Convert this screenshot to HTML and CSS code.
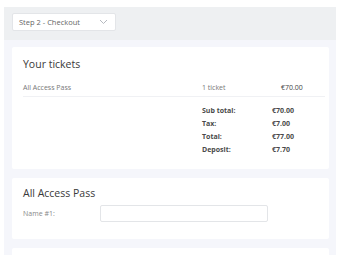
FILE: index.html
```html
<!DOCTYPE html>
<html>
<head>
  <title>Checkout</title>
  <link rel="stylesheet" href="styles.css">
</head>
<body>
  <div class="page">
    <div class="topbar">
      <div class="step-select">
        <span>Step 2 - Checkout</span>
        <svg class="chevron" width="9" height="6" viewBox="0 0 9 6"><path d="M1 1l3.5 3.5L8 1" fill="none" stroke="#b5b9bf" stroke-width="1"/></svg>
      </div>
    </div>

    <div class="content">
      <div class="card">
        <h2>Your tickets</h2>
        <div class="ticket-row">
          <span class="t-name">All Access Pass</span>
          <span class="t-qty">1 ticket</span>
          <span class="t-price">€70.00</span>
        </div>
        <div class="totals">
          <div class="total-row"><span>Sub total:</span><span>€70.00</span></div>
          <div class="total-row"><span>Tax:</span><span>€7.00</span></div>
          <div class="total-row"><span>Total:</span><span>€77.00</span></div>
          <div class="total-row"><span>Deposit:</span><span>€7.70</span></div>
        </div>
      </div>

      <div class="card attendee">
        <h2>All Access Pass</h2>
        <div class="field">
          <label for="name-1">Name #1:</label>
          <input type="text" id="name-1">
        </div>
      </div>

      <div class="card"></div>
    </div>
  </div>
</body>
</html>
```

FILE: styles.css
```css
body {
  font-family: 'Open Sans', 'Noto Sans', sans-serif;
  margin: 0;
  padding: 7px 4px 0 4px;
  background: #ffffff;
  color: #333;
  overflow: hidden;
  height: 255px;
  box-sizing: border-box;
}

.page {
  background: #f5f6fb;
  height: 100%;
  overflow: hidden;
}

.topbar {
  background: #eef0f2;
  height: 33px;
  padding: 6px 8px 0 8px;
  box-sizing: border-box;
}

.step-select {
  width: 104px;
  height: 18px;
  box-sizing: border-box;
  background: #fff;
  border: 1px solid #e3e5e8;
  border-radius: 2px;
  display: flex;
  align-items: center;
  justify-content: space-between;
  padding: 0 6px 0 6px;
  font-size: 7.5px;
  color: #666;
}

.chevron {
  margin-right: 1px;
}

.content {
  padding: 7px 7px 0 8px;
  display: flex;
  flex-direction: column;
  gap: 9px;
}

.card {
  background: #fff;
  border-radius: 2px;
  padding: 10px 4px 13px 11px;
  min-height: 20px;
}

.card h2 {
  font-size: 10.5px;
  font-weight: 400;
  color: #3a3a3a;
  margin: 0 0 12px 0;
}

.ticket-row {
  display: flex;
  font-size: 7px;
  color: #777;
  padding-bottom: 4px;
  border-bottom: 1px solid #f0f1f4;
}

.t-name {
  width: 179px;
}

.t-qty {
  width: 79px;
}

.t-price {
  color: #444;
}

.totals {
  margin: 7px 0 0 179px;
  display: flex;
  flex-direction: column;
}

.total-row {
  display: flex;
  font-size: 7px;
  font-weight: 700;
  color: #4a4a4a;
  line-height: 13px;
}

.total-row span:first-child {
  width: 70px;
}

.attendee {
  padding-top: 8px;
  padding-bottom: 17px;
}

.attendee h2 {
  margin-bottom: 5px;
}

.field {
  display: flex;
  align-items: center;
}

.field label {
  font-size: 7px;
  color: #888;
  width: 77px;
}

.field input {
  width: 168px;
  height: 17px;
  box-sizing: border-box;
  border: 1px solid #e3e5e8;
  border-radius: 2px;
  padding: 0 6px;
}
```
